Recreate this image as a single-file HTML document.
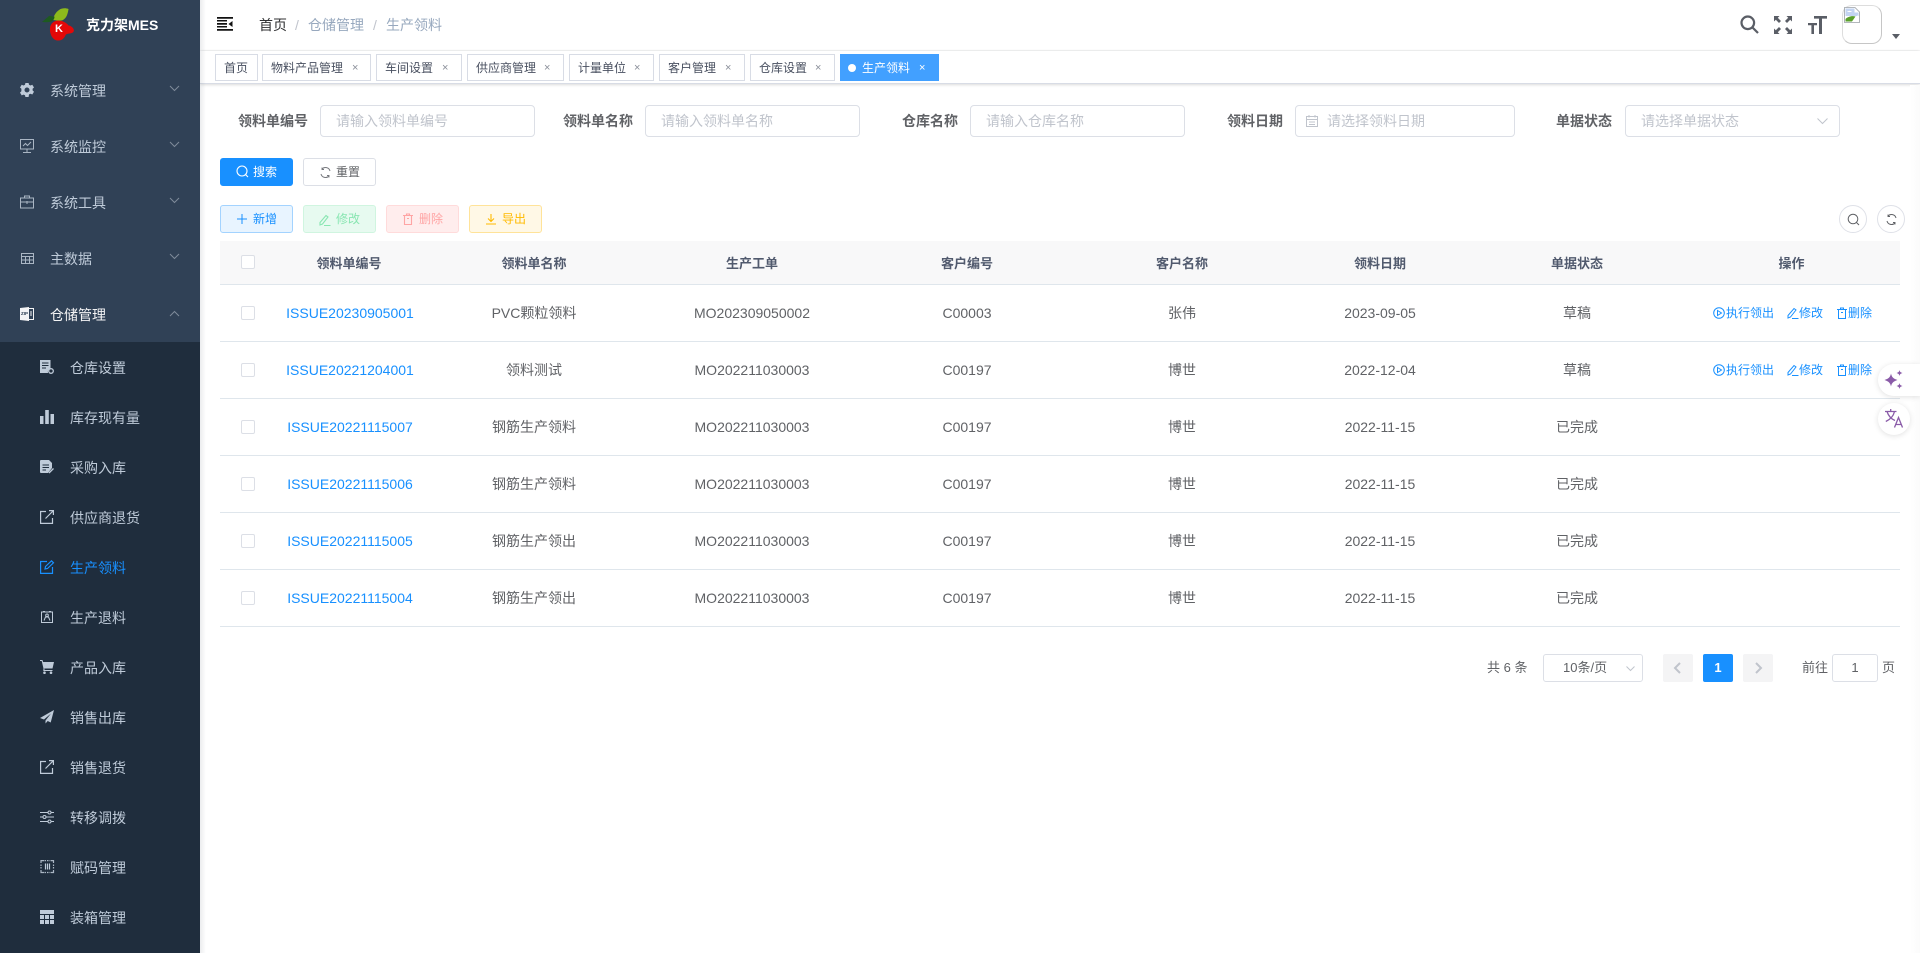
<!DOCTYPE html>
<html lang="zh-CN">
<head>
<meta charset="utf-8">
<title>生产领料</title>
<style>
*{box-sizing:border-box;margin:0;padding:0}
html,body{width:1920px;height:953px;overflow:hidden;background:#fff;font-family:"Liberation Sans","Noto Sans CJK SC",sans-serif;color:#606266;font-size:14px}
.a{position:absolute;white-space:nowrap}
svg{display:block;overflow:visible}
#side{position:absolute;left:0;top:0;width:200px;height:953px;background:#304156;overflow:hidden}
#sub{position:absolute;left:0;top:342px;width:200px;height:611px;background:#1f2d3d}
.mi{position:absolute;left:50px;font-size:14px;line-height:20px;color:#bfcbd9;white-space:nowrap}
.si{position:absolute;left:70px;font-size:14px;line-height:20px;color:#bfcbd9;white-space:nowrap}
.ic{position:absolute;width:14px;height:14px}
#main-shadow{position:absolute;left:200px;top:0;width:6px;height:953px;background:linear-gradient(90deg,rgba(0,21,41,.08),rgba(0,21,41,0))}
#nav{position:absolute;left:200px;top:0;width:1720px;height:50px;background:#fff;box-shadow:0 1px 4px rgba(0,21,41,.08)}
#tags{position:absolute;left:200px;top:51px;width:1720px;height:33px;background:#fff;border-bottom:1px solid #d8dce5;box-shadow:0 1px 3px 0 rgba(0,0,0,.12),0 0 3px 0 rgba(0,0,0,.04)}
.tag{position:absolute;top:54px;height:27px;line-height:26px;border:1px solid #d8dce5;background:#fff;color:#495060;font-size:12px;padding-left:8px;white-space:nowrap}
.tag i{position:absolute;top:0;font-style:normal;font-size:11px;color:#8a8f99;line-height:26px}
.tag.on{background:#42a0ff;border-color:#42a0ff;color:#fff}
.tag.on i{color:#fff}
.lb{position:absolute;top:110px;font-size:14px;font-weight:700;line-height:22px;color:#606266;white-space:nowrap}
.inp{position:absolute;top:105px;height:32px;border:1px solid #dcdfe6;border-radius:4px;background:#fff;color:#c0c4cc;font-size:14px;line-height:30px;padding-left:15px;white-space:nowrap}
.btn{position:absolute;width:73px;height:28px;border:1px solid;border-radius:3px;font-size:12px;line-height:26px;white-space:nowrap}
.btn span{position:absolute;left:32px;top:0}
.btn svg{position:absolute;left:15px;top:6px}
table{position:absolute;left:220px;top:241px;width:1680px;border-collapse:separate;border-spacing:0;table-layout:fixed}
th{height:44px;background:#f8f8f9;color:#515a6e;font-weight:700;font-size:13px;border-bottom:1px solid #dfe6ec;text-align:center}
td{height:57px;border-bottom:1px solid #dfe6ec;text-align:center;font-size:14px;color:#606266;position:relative}
td a{color:#1890ff;position:relative;left:1px}
.cb{display:inline-block;width:14px;height:14px;border:1px solid #dcdfe6;border-radius:2px;background:#fff;vertical-align:middle;position:relative;top:-1px}
.op{position:absolute;top:312px;font-size:12px;line-height:16px;color:#1890ff;white-space:nowrap}
.circ{position:absolute;top:205px;width:28px;height:28px;border:1px solid #dfe1e8;border-radius:50%;background:#fff}
.pg{position:absolute;top:654px;height:28px;font-size:13px;line-height:28px;color:#606266;white-space:nowrap}
.pb{position:absolute;top:654px;width:30px;height:28px;border-radius:2px;background:#f4f4f5}
</style>
</head>
<body>

<div id="nav"></div>
<div id="tags"></div>

<div id="side">
  <!-- logo -->
  <svg class="a" style="left:40px;top:7px" width="36" height="36" viewBox="0 0 36 36">
    <path d="M19 3C22 .8 26 1 28.500 2 27.800 7 26.500 11 23 13 20 14.300 17.500 13.500 13 13 13.500 9 15.500 5.500 19 3Z" fill="#8dba1c"/>
    <path d="M2 14.800C5 12.500 7 11 9 9 11 8.500 12.500 10 14.500 9.500 14.500 12 13.500 13 12 14 9 15.500 5 15.500 2 14.800Z" fill="#1e5a20"/>
    <path d="M10 21C9.500 26 12 33 17.500 33.500 23 34 24.500 30 26 27.500 28.500 26 33 27 33.800 24 34.500 21.500 31 18.500 28.500 18.500 26.500 15.500 22 13.500 18 13.500 13 14 10.500 17 10 21Z" fill="#e30808"/>
    <text x="15" y="25" font-family="Liberation Sans" font-weight="700" font-size="11" fill="#fff">K</text>
  </svg>
  <div class="a" style="left:86px;top:15px;font-size:14px;font-weight:700;line-height:20px;color:#fff">克力架MES</div>

  <!-- top-level -->
  <svg class="ic" style="left:20px;top:83px" viewBox="0 0 14 14"><path fill="#bfcbd9" d="M5.400 0h3.200l.4 1.800 1.500.7L12.300 1.700l1.700 2.800-1.400 1.300v1.600l1.400 1.300-1.700 2.800-1.800-.8-1.500.7L8.600 14H5.400L5 12.300l-1.500-.7-1.800.8L0 9.600l1.400-1.300V5.800L0 4.500l1.700-2.800 1.800.8L5 1.800ZM7 4.500a2.500 2.500 0 1 0 0 5 2.500 2.500 0 0 0 0-5Z"/></svg>
  <div class="mi" style="top:81px">系统管理</div>
  <svg class="ic" style="left:20px;top:139px" viewBox="0 0 14 14" fill="none" stroke="#aab6c4" stroke-width="1"><rect x=".5" y=".5" width="13" height="9.500"/><path d="M3 7l2.500-2.500L7.500 6.500 11 3M7 10v3M3 13.500h8"/></svg>
  <div class="mi" style="top:137px">系统监控</div>
  <svg class="ic" style="left:20px;top:195px" viewBox="0 0 14 14" fill="none" stroke="#aab6c4" stroke-width="1"><rect x=".5" y="3" width="13" height="10"/><path d="M4.500 3V1h5v2M.5 7h13M7 6v3"/></svg>
  <div class="mi" style="top:193px">系统工具</div>
  <svg class="ic" style="left:21px;top:252px" viewBox="0 0 14 14" fill="none" stroke="#aab6c4" stroke-width="1"><rect x=".5" y="1.500" width="12" height="10"/><path d="M.5 4.500h12M.5 8h12M4.500 4.500v7M8.500 4.500v7"/></svg>
  <div class="mi" style="top:249px">主数据</div>
  <svg class="ic" style="left:20px;top:307px" viewBox="0 0 14 14"><path fill="#f4f4f5" d="M0 1l9-1v14l-9-1Z"/><path fill="none" stroke="#f4f4f5" d="M9 1.500h4.500v11H9"/><text x="1" y="8" font-size="4.500" font-weight="700" font-family="Liberation Sans" fill="#304156">ZIP</text><path stroke="#f4f4f5" d="M11 4v5"/></svg>
  <div class="mi" style="top:305px;color:#f4f4f5">仓储管理</div>

  <svg class="a" style="left:170px;top:86px" width="9" height="5" fill="none" stroke="#7f8b9a"><path d="M0 0l4.500 4.500L9 0"/></svg>
  <svg class="a" style="left:170px;top:142px" width="9" height="5" fill="none" stroke="#7f8b9a"><path d="M0 0l4.500 4.500L9 0"/></svg>
  <svg class="a" style="left:170px;top:198px" width="9" height="5" fill="none" stroke="#7f8b9a"><path d="M0 0l4.500 4.500L9 0"/></svg>
  <svg class="a" style="left:170px;top:254px" width="9" height="5" fill="none" stroke="#7f8b9a"><path d="M0 0l4.500 4.500L9 0"/></svg>
  <svg class="a" style="left:170px;top:311px" width="9" height="5" fill="none" stroke="#7f8b9a"><path d="M0 5L4.500.5 9 5"/></svg>

  <div id="sub"></div>

  <!-- sub menu -->
  <svg class="ic" style="left:40px;top:360px" viewBox="0 0 14 14"><path fill="#bfcbd9" d="M0 0h10.500v8.500a3.500 3.500 0 0 0-2.500 4.500H0Z"/><path stroke="#1f2d3d" d="M2 3h6.500M2 5.500h6.500M2 8h4"/><circle cx="11" cy="11" r="2.300" fill="none" stroke="#bfcbd9" stroke-width="1.300"/></svg>
  <div class="si" style="top:358px">仓库设置</div>
  <svg class="ic" style="left:40px;top:410px" viewBox="0 0 14 14" fill="#bfcbd9"><path d="M0 6h3.500v8H0ZM5.200 0h3.600v14H5.200ZM10.500 4H14v10h-3.500Z"/></svg>
  <div class="si" style="top:408px">库存现有量</div>
  <svg class="ic" style="left:40px;top:460px" viewBox="0 0 14 14"><path fill="#bfcbd9" d="M1 0h8l3 3v5l-4 5H1a1 1 0 0 1-1-1V1a1 1 0 0 1 1-1Z"/><path stroke="#1f2d3d" d="M2.500 5h6.500M2.500 7.500h6.500M2.500 10h3.500"/><path stroke="#bfcbd9" stroke-width="1.300" d="M9 13l4.500-4.500"/></svg>
  <div class="si" style="top:458px">采购入库</div>
  <svg class="ic" style="left:40px;top:510px" viewBox="0 0 14 14" fill="none" stroke="#bfcbd9" stroke-width="1.200"><path d="M6 1.500H.6v11.900h11.900V8M5.500 8.500L13 1M9 .6h4.400V5"/></svg>
  <div class="si" style="top:508px">供应商退货</div>
  <svg class="ic" style="left:40px;top:560px" viewBox="0 0 14 14" fill="none" stroke="#1890ff" stroke-width="1.200"><path d="M7 1.500H.6v11.900h11.900V7M5 9l.5-2.500L11.500.8l2 2L7.500 8.500Z"/></svg>
  <div class="si" style="top:558px;color:#1890ff">生产领料</div>
  <svg class="ic" style="left:41px;top:611px;width:12px;height:12px" viewBox="0 0 12 12" fill="none" stroke="#bfcbd9"><rect x=".5" y="1" width="11" height="10.500"/><path d="M2 .5h2M8 .5h2M3 9.500L4.500 6h3L9 9.500M6 3a1.300 1.300 0 1 1 0 2.600A1.300 1.300 0 0 1 6 3Z"/></svg>
  <div class="si" style="top:608px">生产退料</div>
  <svg class="ic" style="left:40px;top:660px" viewBox="0 0 14 14"><path fill="#bfcbd9" d="M0 0h2.500l.6 2H14l-1.500 6.500H4.300L4.600 10H12.500v1H3.300L3.500 8.500 1.700 1H0Z"/><circle cx="4.500" cy="12.700" r="1.300" fill="#bfcbd9"/><circle cx="11" cy="12.700" r="1.300" fill="#bfcbd9"/></svg>
  <div class="si" style="top:658px">产品入库</div>
  <svg class="ic" style="left:40px;top:710px" viewBox="0 0 14 14"><path fill="#bfcbd9" d="M14 0L0 8l4 1.500L11 3.500 5.500 10.500v3l2.200-2.500 3 1.500Z"/></svg>
  <div class="si" style="top:708px">销售出库</div>
  <svg class="ic" style="left:40px;top:760px" viewBox="0 0 14 14" fill="none" stroke="#bfcbd9" stroke-width="1.200"><path d="M6 1.500H.6v11.900h11.900V8M5.500 8.500L13 1M9 .6h4.400V5"/></svg>
  <div class="si" style="top:758px">销售退货</div>
  <svg class="ic" style="left:40px;top:810px" viewBox="0 0 14 14" fill="none" stroke="#bfcbd9"><path d="M0 2.500h8M11 2.500h3M0 7h3M6 7h8M0 11.500h8M11 11.500h3"/><circle cx="9.500" cy="2.500" r="1.500"/><circle cx="4.500" cy="7" r="1.500"/><circle cx="9.500" cy="11.500" r="1.500"/></svg>
  <div class="si" style="top:808px">转移调拨</div>
  <svg class="ic" style="left:41px;top:860px;width:13px;height:13px" viewBox="0 0 13 13" fill="none" stroke="#aab6c4" stroke-width="1.200"><path d="M0 3V.6h3M10 .6h2.500V3M0 10v2.500h3M10 12.500h2.500V10" /><path d="M0 4.500V9M12.500 4.500V9M3.500 .6h6M3.500 12.500h6" stroke-dasharray="1.500 1"/><path d="M4.500 3.500v6M6.500 3.500v6M8.500 3.500v6" stroke="#bfcbd9"/></svg>
  <div class="si" style="top:858px">赋码管理</div>
  <svg class="ic" style="left:40px;top:910px" viewBox="0 0 14 14"><path fill="#bfcbd9" d="M0 0h14v4H0ZM0 5h4v4H0ZM5 5h4v4H5ZM10 5h4v4h-4ZM0 10h4v4H0ZM5 10h4v4H5ZM10 10h4v4h-4Z"/></svg>
  <div class="si" style="top:908px">装箱管理</div>
</div>
<div id="main-shadow"></div>

<!-- navbar -->
<svg class="a" style="left:217px;top:17px" width="16" height="14" viewBox="0 0 16 14"><path fill="#111" d="M0 0h16v1.800H0ZM0 6h10v1.800H0ZM0 12h16v1.800H0ZM0 3h10v1.500H0ZM0 9h10v1.500H0ZM15.500 4v6L11.500 7Z"/></svg>
<div class="a" style="left:259px;top:15px;line-height:20px;color:#303133">首页</div>
<div class="a" style="left:295px;top:15px;line-height:20px;color:#c0c4cc">/</div>
<div class="a" style="left:308px;top:15px;line-height:20px;color:#97a8be">仓储管理</div>
<div class="a" style="left:373px;top:15px;line-height:20px;color:#c0c4cc">/</div>
<div class="a" style="left:386px;top:15px;line-height:20px;color:#97a8be">生产领料</div>

<svg class="a" style="left:1740px;top:15px" width="19" height="19" viewBox="0 0 19 19" fill="none" stroke="#5a5e66" stroke-width="2.200"><circle cx="7.800" cy="7.800" r="6.300"/><path d="M12.500 12.500l5.500 5.500"/></svg>
<svg class="a" style="left:1774px;top:16px" width="18" height="18" viewBox="0 0 18 18" fill="#5a5e66"><path d="M0 0h5.500L3.800 1.800 7 5 5 7 1.800 3.800 0 5.500ZM18 0v5.500l-1.800-1.700L13 7l-2-2 3.200-3.200L12.500 0ZM0 18v-5.500l1.800 1.700L5 11l2 2-3.200 3.200L5.500 18ZM18 18h-5.500l1.700-1.800L11 13l2-2 3.200 3.200 1.800-1.700Z"/></svg>
<svg class="a" style="left:1808px;top:16px" width="19" height="18" viewBox="0 0 19 18" fill="#5a5e66"><path d="M6 0h13v2.600h-5V18h-3V2.600H6ZM0 7h9v2.200H6V18H3.400V9.200H0Z"/></svg>

<div class="a" style="left:1842px;top:5px;width:40px;height:39px;border:1px solid #c6c6c6;border-radius:10px;border-left-color:#ddd;border-top-color:#ddd;background:#fff"></div>
<svg class="a" style="left:1844px;top:7px" width="16" height="16" viewBox="0 0 16 16">
  <path fill="#fff" stroke="#9aa0a6" stroke-width=".8" d="M.5.500H11L15.500 5v10.500H.5Z"/>
  <path fill="#c3d4f2" d="M1.500 1.500h9v4h4V9L1.500 9Z"/>
  <path fill="#5aa02c" d="M1.500 14.500V12c2-2 6-3.500 10-2.500L8 14.500Z"/>
  <path fill="#fff" d="M3 5c1-1.500 4-1.500 5 0Z"/>
  <path fill="#fff" d="M8 15l6-7v2l-4 5Z"/>
</svg>
<svg class="a" style="left:1892px;top:34px" width="8" height="5"><path fill="#5a5e66" d="M0 0h8L4 5Z"/></svg>

<!-- tags -->
<div class="tag" style="left:215px;width:43px">首页</div>
<div class="tag" style="left:262px;width:109px">物料产品管理<i style="left:89px">×</i></div>
<div class="tag" style="left:376px;width:86px">车间设置<i style="left:65px">×</i></div>
<div class="tag" style="left:467px;width:97px">供应商管理<i style="left:76px">×</i></div>
<div class="tag" style="left:569px;width:85px">计量单位<i style="left:64px">×</i></div>
<div class="tag" style="left:659px;width:86px">客户管理<i style="left:65px">×</i></div>
<div class="tag" style="left:750px;width:85px">仓库设置<i style="left:64px">×</i></div>
<div class="tag on" style="left:840px;width:99px"><span style="position:absolute;left:7px;top:9px;width:8px;height:8px;border-radius:50%;background:#fff"></span><span style="position:absolute;left:21px;top:0">生产领料</span><i style="left:78px">×</i></div>

<!-- search form -->
<div class="lb" style="left:238px">领料单编号</div>
<div class="inp" style="left:320px;width:215px">请输入领料单编号</div>
<div class="lb" style="left:563px">领料单名称</div>
<div class="inp" style="left:645px;width:215px">请输入领料单名称</div>
<div class="lb" style="left:902px">仓库名称</div>
<div class="inp" style="left:970px;width:215px">请输入仓库名称</div>
<div class="lb" style="left:1227px">领料日期</div>
<div class="inp" style="left:1295px;width:220px;padding-left:31px">请选择领料日期</div>
<svg class="a" style="left:1306px;top:115px" width="12" height="12" viewBox="0 0 12 12" fill="none" stroke="#c0c4cc"><rect x=".5" y="1.500" width="11" height="10"/><path d="M.5 4.500h11M3 0v2.500M9 0v2.500M3 7h6M3 9.500h6"/></svg>
<div class="lb" style="left:1556px">单据状态</div>
<div class="inp" style="left:1625px;width:215px">请选择单据状态</div>
<svg class="a" style="left:1817px;top:118px" width="11" height="6" fill="none" stroke="#c0c4cc"><path d="M.5.500L5.500 5.500 10.500.5"/></svg>

<div class="btn" style="left:220px;top:158px;background:#1890ff;border-color:#1890ff;color:#fff"><svg width="13" height="13" viewBox="0 0 13 13" fill="none" stroke="#fff" stroke-width="1.100"><circle cx="6" cy="6" r="5"/><path d="M9.500 9.500l2.500 2.500"/></svg><span>搜索</span></div>
<div class="btn" style="left:303px;top:158px;background:#fff;border-color:#dcdfe6;color:#606266"><svg style="left:16px;top:8px" width="11" height="11" viewBox="0 0 11 11" fill="none" stroke="#77797e"><path d="M10 4A4.700 4.700 0 0 0 2 2M1 7a4.700 4.700 0 0 0 8 2"/><path d="M2 .5V2.500H4M9 10.500V8.500H7" stroke-width=".9"/></svg><span>重置</span></div>

<div class="btn" style="left:220px;top:205px;background:#e8f4ff;border-color:#a3d3ff;color:#1890ff"><svg style="top:7px" width="12" height="12" fill="none" stroke="#1890ff"><path d="M6 1v10M1 6h10"/></svg><span>新增</span></div>
<div class="btn" style="left:303px;top:205px;background:#e7faf0;border-color:#d0f5e0;color:#89e6b2"><svg style="top:8px" width="12" height="12" viewBox="0 0 12 12" fill="none" stroke="#89e6b2" stroke-width="1.100"><path d="M1 8.500L7 1.500l2 1.500-5.500 7L1 11ZM5 11.500h6.500"/></svg><span>修改</span></div>
<div class="btn" style="left:386px;top:205px;background:#ffeded;border-color:#ffdbdb;color:#ffa4a4"><svg style="top:7px" width="12" height="12" viewBox="0 0 12 12" fill="none" stroke="#ffa4a4" stroke-width="1.100"><path d="M1 2.500h10M2.500 2.500v9h7v-9M4.500 2.500V1h3v1.500M5 5.500h2"/></svg><span>删除</span></div>
<div class="btn" style="left:469px;top:205px;background:#fff8e6;border-color:#ffe399;color:#ffba00"><svg style="top:7px" width="12" height="12" viewBox="0 0 12 12" fill="none" stroke="#ffba00" stroke-width="1.100"><path d="M6 1v7M3 5.500L6 8.500l3-3M1 11h10"/></svg><span>导出</span></div>

<div class="circ" style="left:1839px"><svg style="position:absolute;left:7px;top:7px" width="13" height="13" viewBox="0 0 13 13" fill="none" stroke="#606266"><circle cx="6" cy="6" r="4.800"/><path d="M9.500 9.500l2.500 2.500"/></svg></div>
<div class="circ" style="left:1877px"><svg style="position:absolute;left:8px;top:8px" width="11" height="11" viewBox="0 0 11 11" fill="none" stroke="#606266"><path d="M10 4A4.700 4.700 0 0 0 2 2M1 7a4.700 4.700 0 0 0 8 2"/><path d="M2 .5V2.500H4M9 10.500V8.500H7" stroke-width=".9"/></svg></div>

<!-- table -->
<table>
<colgroup><col style="width:55px"><col style="width:148px"><col style="width:222px"><col style="width:214px"><col style="width:216px"><col style="width:214px"><col style="width:182px"><col style="width:212px"><col style="width:217px"></colgroup>
<thead><tr><th><span class="cb"></span></th><th>领料单编号</th><th>领料单名称</th><th>生产工单</th><th>客户编号</th><th>客户名称</th><th>领料日期</th><th>单据状态</th><th>操作</th></tr></thead>
<tbody>
<tr><td><span class="cb"></span></td><td><a>ISSUE20230905001</a></td><td>PVC颗粒领料</td><td>MO202309050002</td><td>C00003</td><td>张伟</td><td>2023-09-05</td><td>草稿</td><td></td></tr>
<tr><td><span class="cb"></span></td><td><a>ISSUE20221204001</a></td><td>领料测试</td><td>MO202211030003</td><td>C00197</td><td>博世</td><td>2022-12-04</td><td>草稿</td><td></td></tr>
<tr><td><span class="cb"></span></td><td><a>ISSUE20221115007</a></td><td>钢筋生产领料</td><td>MO202211030003</td><td>C00197</td><td>博世</td><td>2022-11-15</td><td>已完成</td><td></td></tr>
<tr><td><span class="cb"></span></td><td><a>ISSUE20221115006</a></td><td>钢筋生产领料</td><td>MO202211030003</td><td>C00197</td><td>博世</td><td>2022-11-15</td><td>已完成</td><td></td></tr>
<tr><td><span class="cb"></span></td><td><a>ISSUE20221115005</a></td><td>钢筋生产领出</td><td>MO202211030003</td><td>C00197</td><td>博世</td><td>2022-11-15</td><td>已完成</td><td></td></tr>
<tr><td><span class="cb"></span></td><td><a>ISSUE20221115004</a></td><td>钢筋生产领出</td><td>MO202211030003</td><td>C00197</td><td>博世</td><td>2022-11-15</td><td>已完成</td><td></td></tr>
</tbody>
</table>

<!-- row actions row 1 -->
<svg class="a" style="left:1713px;top:307px" width="12" height="12" viewBox="0 0 12 12" fill="none" stroke="#1890ff"><circle cx="6" cy="6" r="5.300"/><path d="M4.500 3.500v5L8.500 6Z"/></svg>
<div class="op" style="left:1726px;top:305px">执行领出</div>
<svg class="a" style="left:1787px;top:307px" width="12" height="12" viewBox="0 0 12 12" fill="none" stroke="#1890ff"><path d="M1 8.500L7 1.500l2 1.500-5.500 7L1 11ZM5 11.500h6.500"/></svg>
<div class="op" style="left:1799px;top:305px">修改</div>
<svg class="a" style="left:1836px;top:307px" width="12" height="12" viewBox="0 0 12 12" fill="none" stroke="#1890ff"><path d="M1 2.500h10M2.500 2.500v9h7v-9M4.500 2.500V1h3v1.500M5 5.500h2"/></svg>
<div class="op" style="left:1848px;top:305px">删除</div>
<!-- row actions row 2 -->
<svg class="a" style="left:1713px;top:364px" width="12" height="12" viewBox="0 0 12 12" fill="none" stroke="#1890ff"><circle cx="6" cy="6" r="5.300"/><path d="M4.500 3.500v5L8.500 6Z"/></svg>
<div class="op" style="left:1726px;top:362px">执行领出</div>
<svg class="a" style="left:1787px;top:364px" width="12" height="12" viewBox="0 0 12 12" fill="none" stroke="#1890ff"><path d="M1 8.500L7 1.500l2 1.500-5.500 7L1 11ZM5 11.500h6.500"/></svg>
<div class="op" style="left:1799px;top:362px">修改</div>
<svg class="a" style="left:1836px;top:364px" width="12" height="12" viewBox="0 0 12 12" fill="none" stroke="#1890ff"><path d="M1 2.500h10M2.500 2.500v9h7v-9M4.500 2.500V1h3v1.500M5 5.500h2"/></svg>
<div class="op" style="left:1848px;top:362px">删除</div>

<!-- pagination -->
<div class="pg" style="left:1487px">共 6 条</div>
<div class="a" style="left:1543px;top:654px;width:100px;height:28px;border:1px solid #dcdfe6;border-radius:3px;font-size:13px;line-height:26px;padding-left:19px;color:#606266">10条/页</div>
<svg class="a" style="left:1626px;top:666px" width="9" height="5" fill="none" stroke="#c0c4cc"><path d="M.5.500L4.500 4.500 8.500.5"/></svg>
<div class="pb" style="left:1663px"><svg style="position:absolute;left:11px;top:8px" width="7" height="12" fill="none" stroke="#c0c4cc" stroke-width="2"><path d="M6 1L1 6l5 5"/></svg></div>
<div class="pb" style="left:1703px;background:#1890ff;color:#fff;font-size:13px;font-weight:700;text-align:center;line-height:28px">1</div>
<div class="pb" style="left:1743px"><svg style="position:absolute;left:12px;top:8px" width="7" height="12" fill="none" stroke="#c0c4cc" stroke-width="2"><path d="M1 1l5 5-5 5"/></svg></div>
<div class="pg" style="left:1802px">前往</div>
<div class="a" style="left:1832px;top:654px;width:46px;height:28px;border:1px solid #dcdfe6;border-radius:3px;font-size:13px;line-height:26px;text-align:center;color:#606266">1</div>
<div class="pg" style="left:1882px">页</div>

<!-- right gutter -->
<div class="a" style="left:1910px;top:85px;width:10px;height:868px;background:linear-gradient(90deg,#fff,#fbfbfb)"></div>

<!-- floating widgets -->
<div class="a" style="left:1878px;top:364px;width:42px;height:32px;background:#fff;border-radius:16px 0 0 16px;box-shadow:0 1px 6px rgba(0,0,0,.12)"></div>
<svg class="a" style="left:1884px;top:370px" width="20" height="20" viewBox="0 0 20 20" fill="#8a5ba8"><path d="M7 3.500C7.800 7 9 8.500 13.500 10 9 11.500 7.800 13 7 16.500 6.200 13 5 11.500.5 10 5 8.500 6.200 7 7 3.500ZM15.500 0c.4 1.700 1 2.500 3 3-2 .5-2.600 1.300-3 3-.4-1.700-1-2.500-3-3 2-.5 2.600-1.300 3-3ZM15.500 13c.4 1.700 1 2.500 3 3-2 .5-2.600 1.300-3 3-.4-1.700-1-2.500-3-3 2-.5 2.600-1.300 3-3Z"/></svg>
<div class="a" style="left:1878px;top:403px;width:32px;height:32px;background:#fff;border-radius:50%;box-shadow:0 1px 6px rgba(0,0,0,.12)"></div>
<svg class="a" style="left:1885px;top:409px" width="19" height="19" viewBox="0 0 19 19" fill="none" stroke="#8a5ba8" stroke-width="1.300"><path d="M0 2.500h11.500M5.700 0v2.500M9.500 2.500C8.500 7 5 10.500.8 12.500M2 2.500C3.500 7 6 10 10 11.500"/><path d="M9.500 18.500L13.500 8.500 17.500 18.500M11 15.500h5"/></svg>

</body>
</html>
